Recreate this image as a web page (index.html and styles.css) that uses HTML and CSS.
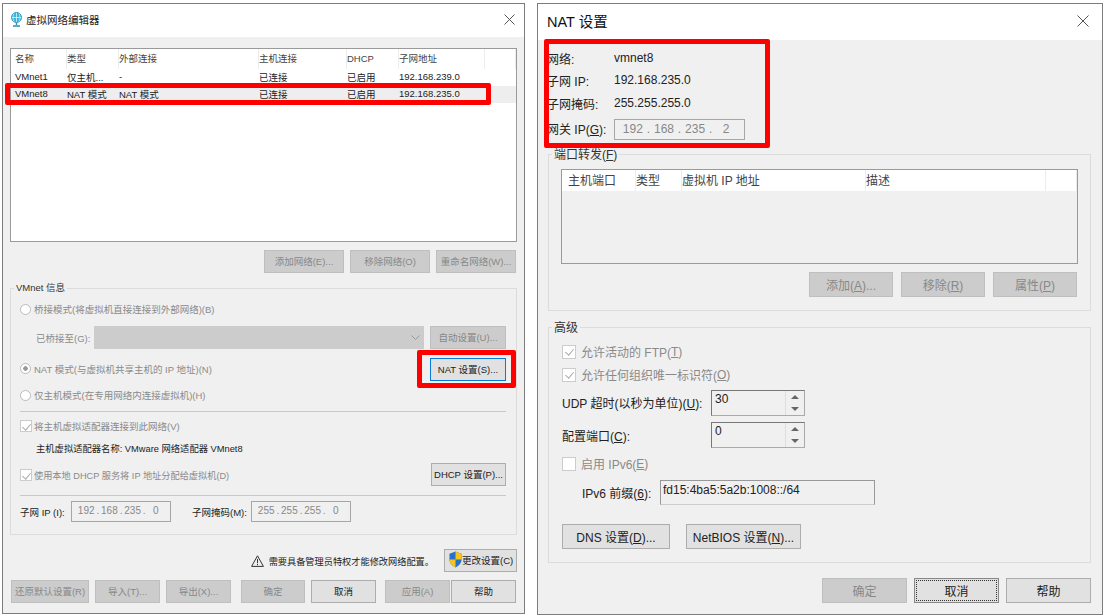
FILE: index.html
```html
<!DOCTYPE html>
<html lang="zh-CN">
<head>
    <meta charset="UTF-8">
    <meta name="viewport" content="width=device-width, initial-scale=1.0">
    <title>虚拟网络编辑器</title>
    <link rel="stylesheet" href="styles.css">
</head>
<body>
    <!-- Virtual network editor -->
    <div class="window editor">
        <div class="titlebar">
            <svg class="appicon" width="11" height="15" viewBox="0 0 11 15">
                <circle cx="5.500" cy="5.500" r="5" fill="#39b7d8" stroke="#1c87ad" stroke-width=".8"/>
                <path d="M.8 5.500h9.400M5.500.8v9.400M3 1.500c-1.400 2.600-1.400 5.400 0 8M8 1.500c1.400 2.600 1.400 5.400 0 8" fill="none" stroke="#e8fbff" stroke-width=".7"/>
                <path d="M5.500 10.500v2.500M2 14h7" stroke="#2a8fb0" stroke-width="1.400" fill="none"/>
            </svg>
            <span class="title-small">虚拟网络编辑器</span>
            <svg class="close" width="11" height="11" viewBox="0 0 11 11"><path d="M.5.500l10 10M10.500.500l-10 10" stroke="#555" fill="none"/></svg>
        </div>
        <div class="body">
            <div class="list net-list">
                <div class="row head">
                    <span>名称</span><span>类型</span><span>外部连接</span><span>主机连接</span><span>DHCP</span><span>子网地址</span><span></span>
                </div>
                <div class="row">
                    <span>VMnet1</span><span>仅主机...</span><span>-</span><span>已连接</span><span>已启用</span><span>192.168.239.0</span><span></span>
                </div>
                <div class="row selected">
                    <span>VMnet8</span><span>NAT 模式</span><span>NAT 模式</span><span>已连接</span><span>已启用</span><span>192.168.235.0</span><span></span>
                </div>
            </div>
            <div class="actions net-actions">
                <button class="btn off">添加网络(E)...</button>
                <button class="btn off">移除网络(O)</button>
                <button class="btn off">重命名网络(W)...</button>
            </div>
            <div class="group info-group">
                <span class="legend">VMnet 信息</span>
                <div class="line muted lift"><i class="radio"></i>桥接模式(将虚拟机直接连接到外部网络)(B)</div>
                <div class="line muted bridge-line">
                    <span class="bridge-label">已桥接至(G):</span>
                    <div class="select"><svg width="9" height="5" viewBox="0 0 9 5"><path d="M.5.500l4 4 4-4" fill="none" stroke="#999"/></svg></div>
                    <button class="btn off auto-btn">自动设置(U)...</button>
                </div>
                <div class="line muted spread">
                    <span class="line lift"><i class="radio on"></i>NAT 模式(与虚拟机共享主机的 IP 地址)(N)</span>
                    <button class="btn focus nat-btn">NAT 设置(S)...</button>
                </div>
                <div class="line muted lift"><i class="radio"></i>仅主机模式(在专用网络内连接虚拟机)(H)</div>
                <div class="sep"></div>
                <div class="line muted lift"><i class="check on"></i>将主机虚拟适配器连接到此网络(V)</div>
                <div class="line adapter-name lift">主机虚拟适配器名称: VMware 网络适配器 VMnet8</div>
                <div class="line muted spread">
                    <span class="line dhcp-text"><i class="check on"></i>使用本地 DHCP 服务将 IP 地址分配给虚拟机(D)</span>
                    <button class="btn dhcp-btn">DHCP 设置(P)...</button>
                </div>
                <div class="sep"></div>
                <div class="line subnet-line">
                    <span class="subnet-label">子网 IP (I):</span>
                    <span class="ip ip-small"><b>192</b>.<b>168</b>.<b>235</b>.<b>0</b></span>
                    <span class="mask-label">子网掩码(M):</span>
                    <span class="ip ip-small"><b>255</b>.<b>255</b>.<b>255</b>.<b>0</b></span>
                </div>
            </div>
            <div class="notice">
                <svg width="13" height="12" viewBox="0 0 13 12"><path d="M6.500.800L12.400 11.400H.6z" fill="none" stroke="#333"/><path d="M6.500 4v4.200M6.500 9v1.200" stroke="#333"/></svg>
                <span>需要具备管理员特权才能修改网络配置。</span>
                <button class="btn change-btn">
                    <svg width="13" height="17" viewBox="0 0 14 16" preserveAspectRatio="none">
                        <path d="M7 .5L13.500 2.500V8c0 3.500-3 6-6.500 7.500C3.500 14 .5 11.500.5 8V2.500z" fill="#2a6fc9"/>
                        <path d="M7 .5L13.500 2.500V8H7zM7 8v7.500C3.500 14 .5 11.500.5 8z" fill="#f5c51c"/>
                    </svg>更改设置(C)
                </button>
            </div>
            <div class="footer">
                <button class="btn off restore-btn">还原默认设置(R)</button>
                <button class="btn off">导入(T)...</button>
                <button class="btn off">导出(X)...</button>
                <button class="btn off confirm-btn">确定</button>
                <button class="btn">取消</button>
                <button class="btn off apply-btn">应用(A)</button>
                <button class="btn help-btn">帮助</button>
            </div>
        </div>
    </div>

    <!-- NAT settings -->
    <div class="window nat">
        <div class="titlebar">
            <span class="title-large">NAT 设置</span>
            <svg class="close" width="12" height="12" viewBox="0 0 12 12"><path d="M.5.500l11 11M11.500.500l-11 11" stroke="#555" fill="none"/></svg>
        </div>
        <div class="body">
            <div class="nat-info">
                <span>网络:</span><span>vmnet8</span>
                <span>子网 IP:</span><span>192.168.235.0</span>
                <span>子网掩码:</span><span>255.255.255.0</span>
                <span>网关 IP(<u>G</u>):</span>
                <span class="ip ip-large"><b>192</b>.<b>168</b>.<b>235</b>.<b>2</b></span>
            </div>
            <div class="group port-group">
                <span class="legend">端口转发(<u>F</u>)</span>
                <div class="list port-list">
                    <div class="row head">
                        <span>主机端口</span><span>类型</span><span>虚拟机 IP 地址</span><span>描述</span><span></span>
                    </div>
                </div>
                <div class="actions port-actions">
                    <button class="btn off">添加(<u>A</u>)...</button>
                    <button class="btn off">移除(<u>R</u>)</button>
                    <button class="btn off">属性(<u>P</u>)</button>
                </div>
            </div>
            <div class="group adv-group">
                <span class="legend">高级</span>
                <div class="line muted"><i class="check on"></i>允许活动的 FTP(<u>T</u>)</div>
                <div class="line muted"><i class="check on"></i>允许任何组织唯一标识符(<u>O</u>)</div>
                <div class="line">
                    <span class="spin-label">UDP 超时(以秒为单位)(<u>U</u>):</span>
                    <div class="spin"><span class="spin-val">30</span><span class="arrows"><i class="up"></i><i class="down"></i></span></div>
                </div>
                <div class="line">
                    <span class="spin-label">配置端口(<u>C</u>):</span>
                    <div class="spin"><span class="spin-val">0</span><span class="arrows"><i class="up"></i><i class="down"></i></span></div>
                </div>
                <div class="line muted"><i class="check"></i>启用 IPv6(<u>E</u>)</div>
                <div class="line v6-line">
                    <span class="v6-label">IPv6 前缀(<u>6</u>):</span>
                    <span class="v6-input">fd15:4ba5:5a2b:1008::/64</span>
                </div>
                <div class="line dns-line">
                    <button class="btn dns-btn">DNS 设置(<u>D</u>)...</button>
                    <button class="btn bios-btn">NetBIOS 设置(<u>N</u>)...</button>
                </div>
            </div>
            <div class="actions nat-footer">
                <button class="btn off">确定</button>
                <button class="btn dotted">取消</button>
                <button class="btn">帮助</button>
            </div>
        </div>
    </div>

    <!-- Red marks drawn on top of the screenshot -->
    <div class="mark mark-row"></div>
    <div class="mark mark-btn"></div>
    <div class="mark mark-info"></div>
</body>
</html>
```

FILE: styles.css
```css
* { box-sizing: border-box; }
html, body { margin: 0; height: 100%; }
body { position: relative; width: 1105px; height: 616px; overflow: hidden; background: #fff; color: #222; font-family: "Liberation Sans", "Noto Sans CJK SC", sans-serif; font-size: 9.500px; }
u { text-decoration: underline; }
i { font-style: normal; }

.window { position: absolute; top: 3px; display: flex; flex-direction: column; background: #f0f0f0; border: 1px solid #7d7d7d; }
.editor { left: 2px; width: 523px; height: 611px; }
.nat { left: 537px; width: 566px; height: 612px; font-size: 12px; }

.titlebar { display: flex; align-items: center; background: #fff; flex: none; height: 33px; padding: 0 9px 2px 8px; }
.nat .titlebar { height: 36px; padding: 0 13px 3px 9px; }
.appicon { margin: 0 4px 0 0; }
.title-small { font-size: 10.500px; color: #222; }
.title-large { font-size: 14.500px; color: #111; }
.close { margin-left: auto; }

.body { flex: 1; display: flex; flex-direction: column; }
.editor .body { padding: 11px 7px 0; }
.nat .body { padding: 8px 11px 0 9px; }

/* lists */
.list { background: #fff; border: 1px solid #9a9a9a; flex: none; }
.net-list { height: 194px; }
.row { display: grid; align-items: center; height: 17px; padding: 0 0 2px 4px; }
.net-list .row { grid-template-columns: 52px 52px 140px 88px 52px 86px 1fr; }
.net-list .row.head { height: 20px; padding-bottom: 0; color: #444; }
.row.head span { height: 100%; display: flex; align-items: center; padding-bottom: 2px; border-right: 1px solid #ececec; }
.row.selected { background: #eee; }
.port-list { height: 95px; margin: 5px 12px 0 12px; background: #f0f0f0; }
.port-list .row { grid-template-columns: 68px 46px 184px 180px 1fr; height: 21px; padding: 0 0 0 6px; background: #fff; color: #444; }

/* buttons */
.btn { height: 23px; padding: 0; background: #e1e1e1; border: 1px solid #adadad; font: inherit; color: #222; white-space: nowrap; }
.editor .btn { padding-bottom: 2px; }
.btn.off { background: #ccc; border-color: #bfbfbf; color: #888; }
.btn.focus { border: 1.500px solid #0a78d7; }
.btn.dotted { outline: 1px dotted #333; outline-offset: -3px; border-color: #888; }
.actions { display: flex; justify-content: flex-end; flex: none; }
.net-actions { gap: 6px; margin-top: 8px; padding-right: 1px; }
.net-actions .btn { width: 80px; }

/* groups */
.group { position: relative; border: 1px solid #dcdcdc; flex: none; }
.legend { position: absolute; left: 3px; top: -8px; background: #f0f0f0; padding: 0 2px; color: #333; line-height: 13px; }
.nat .legend { top: -6px; }
.info-group { margin-top: 15px; height: 247px; padding: 9px 10px 0 9px; display: grid; grid-template-rows: 24px 31px 33px 20px 10px 22px 22px 29px 12px 21px; }
.line { display: flex; align-items: center; }
.lift { padding-bottom: 2px; }
.spread { justify-content: space-between; }
.muted { color: #8a8a8a; }
.radio { width: 11px; height: 11px; margin-right: 3px; border: 1px solid #bbb; border-radius: 50%; background: #fff; flex: none; }
.radio.on { background: radial-gradient(#999 0 2px, #fff 2.500px); }
.check { position: relative; width: 12px; height: 12px; margin-right: 2px; border: 1px solid #ccc; background: #fff; flex: none; }
.check.on::after { content: ""; position: absolute; left: 3px; top: 1px; width: 4px; height: 7px; border: solid #aaa; border-width: 0 1px 1px 0; transform: rotate(40deg); }
.adv-group .check { width: 14px; height: 14px; margin: 0 5px 0 0; }
.adv-group .check.on::after { left: 4px; top: 1px; }
.dhcp-text { font-size: 9.200px; }
.sep { height: 1px; background: #c8c8c8; align-self: center; }
.bridge-label { width: 58px; margin-left: 16px; white-space: nowrap; }
.select { display: flex; align-items: center; justify-content: flex-end; width: 330px; height: 23px; padding-right: 4px; background: #ccc; }
.auto-btn { width: 76px; margin-left: 6px; }
.nat-btn { width: 76px; }
.dhcp-btn { width: 75px; }
.adapter-name { padding-left: 16px; font-size: 9.300px; color: #222; }
.ip { display: flex; align-items: center; justify-content: space-between; background: #f0f0f0; border: 1px solid #a6a6a6; color: #888; }
.ip b { font-weight: normal; flex: 1; text-align: center; }
.ip-small { width: 100px; height: 21px; padding: 0 4px 2px; font-size: 10px; }
.subnet-label { width: 51px; white-space: nowrap; }
.mask-label { width: 59px; margin-left: 21px; white-space: nowrap; }

.notice { display: flex; align-items: center; justify-content: flex-end; margin-top: 14px; height: 23px; font-size: 9.200px; }
.notice > svg { margin-right: 5px; }
.notice span { margin-right: 10px; }
.change-btn { display: flex; align-items: center; width: 73px; padding-left: 4px; font-size: 9.500px; }
.footer { display: flex; margin-top: 8px; padding-left: 1px; gap: 6px; }
.footer .btn { width: 65px; }
.footer .restore-btn { width: 78px; }
.footer .confirm-btn { width: 64px; margin-left: 4px; }
.footer .apply-btn { margin-left: 3px; }
.footer .help-btn { margin-left: -5px; }

/* NAT dialog */
.nat-info { display: grid; grid-template-columns: 67px auto; grid-template-rows: 22px 22px 24px 27px; align-items: center; justify-content: start; white-space: nowrap; flex: none; }
.nat-info > span { padding-bottom: 2px; }
.nat-info > .ip { padding: 0 4px 2px; }
.ip-large { width: 131px; height: 21px; font-size: 12px; }
.port-group { margin: 11px 0 0 1px; height: 157px; padding-top: 9px; }
.port-actions { gap: 8px; margin: 8px 13px 0 0; }
.port-actions .btn { width: 84px; height: 25px; }
.adv-group { margin: 16px 0 0 1px; height: 236px; padding: 12px 12px 0 13px; display: grid; grid-template-rows: 23px 23px 33px 32px 25px 32px 1fr; align-content: start; }
.spin-label { width: 149px; white-space: nowrap; color: #222; }
.spin { display: flex; width: 94px; height: 26px; border: 1px solid #aaa; border-top-color: #777; border-left-color: #777; background: #f0f0f0; }
.spin-val { flex: 1; padding: 1px 3px; }
.arrows { display: flex; flex-direction: column; width: 19px; border-left: 1px solid #ddd; }
.arrows i { position: relative; flex: 1; }
.arrows i::after { content: ""; position: absolute; left: 5px; top: 4px; border: 4px solid transparent; border-top: 0; border-bottom: 4px solid #666; }
.arrows .down::after { transform: scaleY(-1); }
.v6-label { width: 98px; padding-left: 20px; white-space: nowrap; color: #222; }
.v6-input { width: 215px; height: 25px; padding: 2px 2px; background: #f0f0f0; border: 1px solid #999; border-bottom-color: #ccc; }
.dns-line { gap: 16px; align-items: flex-start; padding-top: 16px; }
.dns-btn { width: 108px; height: 25px; }
.bios-btn { width: 115px; height: 25px; }
.nat-footer { gap: 7px; margin: 15px 0 0; }
.nat-footer .btn { width: 85px; height: 25px; }

.mark { position: absolute; border: 5px solid #f00; border-radius: 2px; }
.mark-row { left: 5px; top: 83px; width: 486px; height: 22px; }
.mark-btn { left: 417px; top: 350px; width: 99px; height: 38px; }
.mark-info { left: 544px; top: 39px; width: 226px; height: 109px; }
```
